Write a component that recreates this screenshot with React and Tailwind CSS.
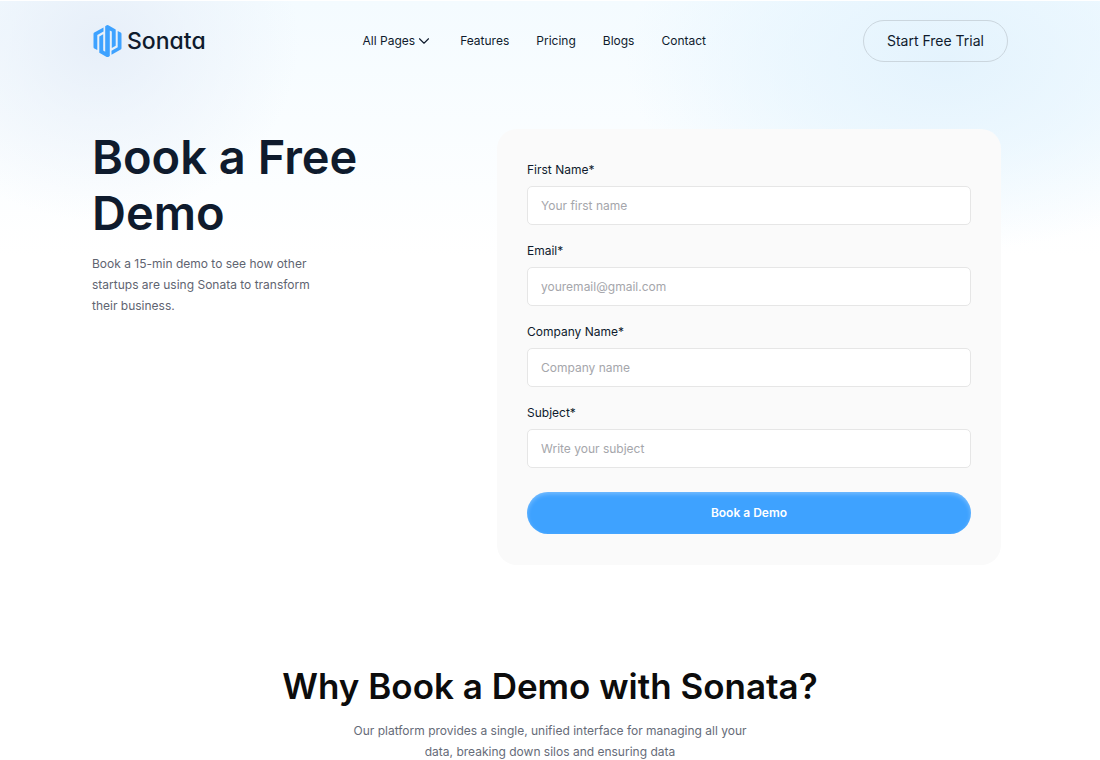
import { ChevronDown } from 'lucide-react';

const navLinks = ['Features', 'Pricing', 'Blogs', 'Contact'];

const fields = [
  { id: 'firstName', label: 'First Name*', placeholder: 'Your first name', type: 'text' },
  { id: 'email', label: 'Email*', placeholder: 'youremail@gmail.com', type: 'email' },
  { id: 'company', label: 'Company Name*', placeholder: 'Company name', type: 'text' },
  { id: 'subject', label: 'Subject*', placeholder: 'Write your subject', type: 'text' },
];

const Logo = () => (
  <a href="#" className="flex items-center gap-1" aria-label="Sonata">
    <svg width="31" height="34" viewBox="0 0 31 34" fill="#3ea2ff" aria-hidden="true">
      <path d="M2.3 8.6 11.5 3.4V7.4L5.3 11V26L2.3 24.5Q1.5 24 1.5 23V10Q1.5 9 2.3 8.6Z" />
      <path d="M7.3 12.4 11.2 10.2V26.6L13.2 27.8V2.2L14.7 1.3Q15.5 .9 16.3 1.3L23.7 5.5V21.8L19.8 24V7.6L17.8 6.4V32L16.3 32.9Q15.5 33.3 14.7 32.9L7.3 28.7Z" />
      <path d="M28.7 25.6 19.5 30.8V26.8L25.7 23.2V6.9L28.7 8.6Q29.5 9 29.5 10V24.2Q29.5 25.2 28.7 25.6Z" />
    </svg>
    <span className="text-[23px] font-medium [font-feature-settings:'cv11']">Sonata</span>
  </a>
);

const Field = ({ id, label, placeholder, type }) => (
  <div className="flex flex-col gap-1.5">
    <label htmlFor={id} className="text-xs leading-5">{label}</label>
    <input
      id={id}
      name={id}
      type={type}
      placeholder={placeholder}
      className="h-[39px] w-full rounded-[5px] border border-[#e6e6e6] bg-white px-[13px] text-xs outline-none placeholder:text-[#a5a6ab] focus:border-[#3ea2ff]"
    />
  </div>
);

function App() {
  return (
    <div className="relative overflow-hidden bg-white font-['Inter',sans-serif] text-[#0f1b2d]">
      {/* Soft glow behind the header */}
      <div className="absolute inset-x-0 top-px h-64 bg-[radial-gradient(ellipse_200px_180px_at_9%_40px,#e7eff9,#e7eff980_45%,#e7eff900),radial-gradient(ellipse_320px_190px_at_86%_60px,#e4f3fd,#e4f4fe99_50%,#e4f4fe00),linear-gradient(to_bottom,#f4fbff,#ffffff)]" />

      <div className="relative mx-auto max-w-[916px]">
        <header className="flex items-center justify-between pt-5">
          <Logo />
          <nav className="flex items-center gap-[27px] text-xs">
            <button type="button" className="flex items-center">
              All Pages <ChevronDown className="h-[18px] w-[18px]" strokeWidth={1.5} />
            </button>
            {navLinks.map((link) => (
              <a key={link} href="#">{link}</a>
            ))}
          </nav>
          <button type="button" className="h-[42px] rounded-full border border-[#cbd6de] px-[23px] text-sm">
            Start Free Trial
          </button>
        </header>

        <main>
          <section className="flex items-start justify-between pt-[67px] pr-[7px]">
            <div className="w-72">
              <h1 className="text-[47px] leading-14 font-semibold">Book a Free Demo</h1>
              <p className="mt-3 w-60 text-xs leading-[21px] text-[#5f6471]">
                Book a 15-min demo to see how other startups are using Sonata to transform their business.
              </p>
            </div>
            <form className="flex w-[504px] flex-col gap-4 rounded-[20px] bg-[#fafafa] px-[30px] py-[31px]">
              {fields.map((field) => (
                <Field key={field.id} {...field} />
              ))}
              <button type="submit" className="mt-2 h-[42px] rounded-full bg-[#3ea2ff] text-xs font-semibold text-white shadow-[inset_0_2px_4px_rgba(255,255,255,0.3)]">
                Book a Demo
              </button>
            </form>
          </section>

          <section className="flex flex-col items-center pt-[97px] text-center">
            <h2 className="text-[35px] leading-[48px] font-semibold text-[#0c0c0c]">Why Book a Demo with Sonata?</h2>
            <p className="mt-2.5 w-[400px] text-xs leading-[21px] text-[#666b78]">
              Our platform provides a single, unified interface for managing all your data, breaking down silos and ensuring data
            </p>
          </section>
        </main>
      </div>
    </div>
  );
}

export default App;
